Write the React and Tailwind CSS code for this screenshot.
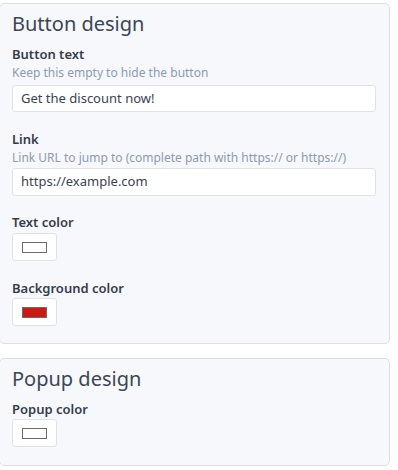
import React from "react";

function Swatch({ color }) {
  return (
    <div className="w-[45px] h-[28px] bg-white border border-[#dfe2e7] rounded-[3px] flex items-center justify-center">
      <div className="w-[25px] h-[11px] border border-[#6b6b6b]" style={{ backgroundColor: color }} />
    </div>
  );
}

export default function App() {
  const font = { fontFamily: "'Noto Sans', sans-serif" };
  return (
    <div className="w-[398px] h-[470px] bg-white pt-[3px] pr-[8px]" style={font}>
      <div className="ml-[-1px] w-[391px] h-[341px] bg-[#f7f8fc] border border-[#dcdfe4] rounded-[5px] pl-[12px] pr-[13px] pt-[7px]">
        <div className="text-[20px] leading-[26px] text-[#3b4656]">Button design</div>
        <div className="mt-[8px] text-[13px] leading-[18px] font-semibold text-[#343d4c]">Button text</div>
        <div className="mt-[1px] text-[12px] leading-[18px] text-[#8b9bb2]">Keep this empty to hide the button</div>
        <div className="mt-[3px] h-[27px] bg-white border border-[#dfe2e7] rounded-[3px] flex items-center pl-[8px] text-[13px] text-[#3b4251]">Get the discount now!</div>
        <div className="mt-[18px] text-[13px] leading-[18px] font-semibold text-[#343d4c]">Link</div>
        <div className="mt-[1px] text-[12px] leading-[18px] text-[#8b9bb2]">Link URL to jump to (complete path with https:// or https://)</div>
        <div className="mt-[1px] h-[28px] bg-white border border-[#dfe2e7] rounded-[3px] flex items-center pl-[8px] text-[13px] text-[#3b4251]">https://example.com</div>
        <div className="mt-[17px] text-[13px] leading-[18px] font-semibold text-[#343d4c]">Text color</div>
        <div className="mt-[2px]"><Swatch color="#ffffff" /></div>
        <div className="mt-[18px] text-[13px] leading-[18px] font-semibold text-[#343d4c]">Background color</div>
        <div className="mt-[1px]"><Swatch color="#cc1a12" /></div>
      </div>
      <div className="mt-[14px] ml-[-1px] w-[391px] h-[108px] bg-[#f7f8fc] border border-[#dcdfe4] rounded-[5px] pl-[12px] pr-[13px] pt-[7px]">
        <div className="text-[20px] leading-[26px] text-[#3b4656]">Popup design</div>
        <div className="mt-[8px] text-[13px] leading-[18px] font-semibold text-[#343d4c]">Popup color</div>
        <div className="mt-[1px]"><Swatch color="#ffffff" /></div>
      </div>
    </div>
  );
}
